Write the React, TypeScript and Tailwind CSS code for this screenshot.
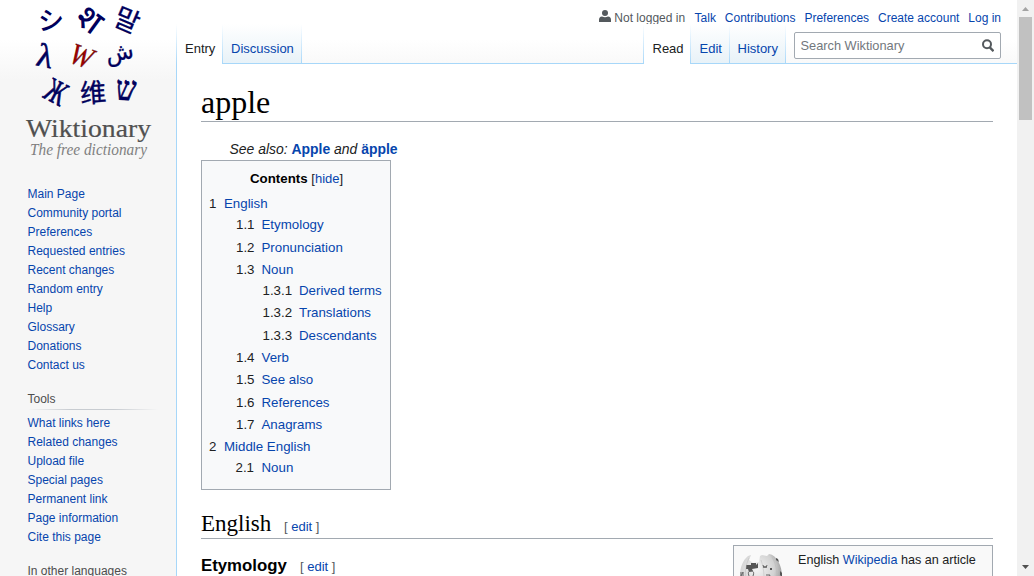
import React from "react";

const link = "text-[#0645ad]";

function Logo() {
  return (
    <svg width="176" height="170" viewBox="0 0 176 170" className="block shrink-0">
      <g fill="#00005c" textAnchor="middle">
        <text x="0" y="10" transform="translate(51 20) rotate(0)" fontFamily="Noto Sans CJK JP, sans-serif" fontSize="26" fontWeight="500">シ</text>
        <text x="0" y="12" transform="translate(90 19) rotate(36)" fontFamily="Noto Sans, Noto Sans Devanagari, sans-serif" fontSize="34" fontWeight="500">श</text>
        <text x="0" y="10" transform="translate(127 20) rotate(23)" fontFamily="Noto Sans CJK KR, sans-serif" fontSize="27" stroke="#00005c" strokeWidth=".3">말</text>
        <text x="0" y="11" transform="translate(45 56) rotate(12)" fontFamily="Liberation Serif, serif" fontSize="33" stroke="#00005c" strokeWidth=".6">λ</text>
        <text x="0" y="10" transform="translate(81.5 56) rotate(20) scale(.9 1)" fontFamily="Liberation Serif, serif" fontStyle="italic" fontSize="30" fill="#a00000" stroke="#300" strokeWidth=".3">W</text>
        <text x="0" y="4" transform="translate(120 56) rotate(-10)" fontFamily="DejaVu Sans, sans-serif" fontSize="23" stroke="#00005c" strokeWidth=".3">ش</text>
        <text x="0" y="11" transform="translate(56 92) rotate(28) scale(.66 1)" fontFamily="Liberation Serif, serif" fontSize="34" stroke="#00005c" strokeWidth=".8">Ж</text>
        <text x="0" y="10" transform="translate(93 92) rotate(-4)" fontFamily="Noto Sans CJK SC, sans-serif" fontSize="26" stroke="#00005c" strokeWidth=".4">维</text>
        <text x="0" y="10" transform="translate(126 90) rotate(3) scale(.84 1)" fontFamily="Liberation Serif, serif" fontSize="34" stroke="#00005c" strokeWidth=".7">ש</text>
      </g>
      <text x="26" y="137" textLength="125" lengthAdjust="spacingAndGlyphs" fontFamily="Liberation Serif, serif" fontSize="25.500" fill="#505050" stroke="#505050" strokeWidth=".2">Wiktionary</text>
      <text x="30" y="155" textLength="117" lengthAdjust="spacingAndGlyphs" fontFamily="Liberation Serif, serif" fontStyle="italic" fontSize="17" fill="#808080">The free dictionary</text>
    </svg>
  );
}

function Globe() {
  return (
    <svg width="46" height="44" viewBox="0 0 46 44" className="block">
      <defs>
        <radialGradient id="globe" cx="40%" cy="35%" r="70%">
          <stop offset="0" stopColor="#f4f4f4" />
          <stop offset=".6" stopColor="#d2d2d2" />
          <stop offset="1" stopColor="#858585" />
        </radialGradient>
      </defs>
      <path d="M9 2 12 1l-2 5 4 3 6-1 1-6 2-1 5 1 2-2C38 1 43 12 43 22 42 35 32 43 22 43 8 43 1 33 1 22 1 13 4 6 9 2Z" fill="url(#globe)" />
      <path d="M7 11h5V9h5v2l2-2v5l-6 1 1 2-4 1-1-3H7ZM37 4l2 1 1 3-3-2ZM41 17l2 2v4l-2-2ZM31 14h2v2h-2Z" fill="#555" />
      <path d="M22 6q4 10 3 28M10 4q-6 12-2 25M33 3q7 12 4 25" fill="none" stroke="#bbb" strokeWidth=".5" />
      <path d="M10 24v-2q-2-5 2-5t2 5v2M9 24h2m2 0h2M24 11l1 3 1-2 1 2 1-3M27 21h4l-2 5M2 18v4l2-4v4" fill="none" stroke="#666" strokeWidth="1" />
    </svg>
  );
}

const mainLinks = ["Main Page", "Community portal", "Preferences", "Requested entries", "Recent changes", "Random entry", "Help", "Glossary", "Donations", "Contact us"];
const toolLinks = ["What links here", "Related changes", "Upload file", "Special pages", "Permanent link", "Page information", "Cite this page"];

function NavList({ items }: { items: string[] }) {
  return (
    <ul>
      {items.map((t) => (
        <li key={t} className="h-[19px]"><a className={link}>{t}</a></li>
      ))}
    </ul>
  );
}

function Sidebar() {
  return (
    <aside className="flex h-[576px] w-[176px] shrink-0 flex-col overflow-hidden bg-[linear-gradient(#fff_40px,#f6f6f6_80px)] text-xs leading-[19px]">
      <Logo />
      <nav className="flex flex-col pt-[15px] pl-[27.5px]">
        <NavList items={mainLinks} />
        <h3 className="mt-[15px] h-[19px] text-[#4d4d4d]">Tools</h3>
        <div className="mb-[4px] h-px w-[130px] bg-[linear-gradient(to_right,rgba(200,204,209,0),#c8ccd1_33%,#c8ccd1_66%,rgba(200,204,209,0))]" />
        <NavList items={toolLinks} />
        <h3 className="mt-[15px] whitespace-nowrap text-[#4d4d4d]">In other languages</h3>
      </nav>
    </aside>
  );
}

const fade = "bg-[linear-gradient(#fff,#a7d7f9)]";

function Divider() {
  return <div className={`w-px shrink-0 ${fade}`} />;
}

function Header() {
  return (
    <header className="flex h-[64px] w-full flex-col bg-[linear-gradient(#fff_40px,#f9f9f9_64px)] text-xs">
      <div className="flex h-[24px] justify-end pr-[16px] leading-[36px] whitespace-nowrap">
        <svg width="12" height="12" viewBox="0 0 12 12" className="mt-[10px] mr-[3.5px]" fill="#54595d">
          <circle cx="6" cy="3.1" r="3" />
          <path d="M0 12V9.800Q0 7 3 6.600q3 1.400 6 0 3 .4 3 3.200V12Z" />
        </svg>
        <span className="mr-[9.5px] text-[#54595d]">Not logged in</span>
        <div className="flex gap-[8.9px]">
          {["Talk", "Contributions", "Preferences", "Create account", "Log in"].map((t) => (
            <a key={t} className={link}>{t}</a>
          ))}
        </div>
      </div>
      <div className="flex h-[40px] text-[13px] leading-[49px]">
        <div className="w-[45px] bg-white pl-[8px] text-[#202122]">Entry</div>
        <Divider />
        <div className={`w-[78px] border-b border-[#a7d7f9] bg-[linear-gradient(#fff,#e8f2f8)] pl-[8px] ${link}`}>Discussion</div>
        <Divider />
        <div className="grow border-b border-[#a7d7f9]" />
        <Divider />
        <div className="w-[46px] bg-white pl-[8.5px] text-[#202122]">Read</div>
        <Divider />
        <div className={`w-[38px] border-b border-[#a7d7f9] bg-[linear-gradient(#fff,#e8f2f8)] pl-[8.5px] ${link}`}>Edit</div>
        <Divider />
        <div className={`w-[55px] border-b border-[#a7d7f9] bg-[linear-gradient(#fff,#e8f2f8)] pl-[7.5px] ${link}`}>History</div>
        <Divider />
        <div className="w-[231px] border-b border-[#a7d7f9] pt-[8px] pl-[8px]">
          <div className="flex h-[27px] w-[207px] items-center justify-between rounded-[2px] border border-[#a2a9b1] bg-white pr-[6px] pl-[5.5px] text-[12.8px] leading-[25px] text-[#72777d]">
            <span>Search Wiktionary</span>
            <svg width="12" height="13" viewBox="0 0 12 13" fill="none" stroke="#54595d" strokeWidth="2">
              <circle cx="5" cy="5.3" r="4" />
              <path d="m7.800 8.300 3.700 3.900" strokeWidth="2.400" />
            </svg>
          </div>
        </div>
      </div>
    </header>
  );
}

const toc = [
  ["h-[21px] pl-[7px]", "w-[15px]", "1", "English"],
  ["h-[23px] pl-[34px]", "w-[25.5px]", "1.1", "Etymology"],
  ["h-[22px] pl-[34px]", "w-[25.5px]", "1.2", "Pronunciation"],
  ["h-[21px] pl-[34px]", "w-[25.5px]", "1.3", "Noun"],
  ["h-[22px] pl-[60.5px]", "w-[36.5px]", "1.3.1", "Derived terms"],
  ["h-[23px] pl-[60.5px]", "w-[36.5px]", "1.3.2", "Translations"],
  ["h-[22px] pl-[60.5px]", "w-[36.5px]", "1.3.3", "Descendants"],
  ["h-[22px] pl-[34px]", "w-[25.5px]", "1.4", "Verb"],
  ["h-[23px] pl-[34px]", "w-[25.5px]", "1.5", "See also"],
  ["h-[22px] pl-[34px]", "w-[25.5px]", "1.6", "References"],
  ["h-[22px] pl-[34px]", "w-[25.5px]", "1.7", "Anagrams"],
  ["h-[21px] pl-[7px]", "w-[15px]", "2", "Middle English"],
  ["h-[22px] pl-[33.5px]", "w-[26px]", "2.1", "Noun"],
];

function Toc() {
  return (
    <div className="h-[330px] w-[190px] border border-[#a2a9b1] bg-[#f8f9fa] pt-[8px] text-[13.3px] leading-5 whitespace-nowrap">
      <div className="h-[25px] pl-[48px]"><b className="text-black">Contents</b> <span className="text-[13px]">[<a className={link}>hide</a>]</span></div>
      {toc.map(([row, num, n, t]) => (
        <div key={n} className={`flex ${row}`}>
          <span className={`shrink-0 ${num}`}>{n}</span>
          <a className={link}>{t}</a>
        </div>
      ))}
    </div>
  );
}

function EditLink() {
  return (
    <span className="text-[13px] leading-5 text-[#54595d]">[ <a className={link}>edit</a> ]</span>
  );
}

function Content() {
  return (
    <main className="flex flex-col pt-[20px] pr-[24px] pl-[24px] text-[14px] text-[#202122]">
      <h1 className="h-[38px] border-b border-[#a2a9b1] font-['Liberation_Serif',serif] text-[32px] leading-[36px] text-black">apple</h1>
      <p className="mt-[17px] h-[21px] pl-[28.5px] text-[13.95px] leading-[21px] italic">
        See also: <b className={`not-italic ${link}`}>Apple</b> and <b className={`not-italic ${link}`}>äpple</b>
      </p>
      <Toc />
      <div className="mt-[20px] flex h-[29px] items-start border-b border-[#a2a9b1]">
        <h2 className="w-[83px] font-['Liberation_Serif',serif] text-[23px] leading-[28px] text-black">English</h2>
        <div className="pt-[6px]"><EditLink /></div>
      </div>
      <div className="flex justify-between">
        <div className="flex pt-[16px]">
          <h3 className="w-[99px] text-[16.8px] leading-[21px] font-bold text-black">Etymology</h3>
          <div className="pt-[1px]"><EditLink /></div>
        </div>
        <div className="mt-[6px] flex h-[60px] w-[260px] border border-[#a2a9b1] bg-[#f9f9f9] pt-[8px] pl-[5px]">
          <Globe />
          <div className="-mt-[4px] ml-[13px] text-[12.6px] leading-5 whitespace-nowrap">English <a className={link}>Wikipedia</a> has an article</div>
        </div>
      </div>
    </main>
  );
}

function Scrollbar() {
  return (
    <div className="flex h-[576px] w-[17px] shrink-0 flex-col items-center bg-[#f1f1f1]">
      <svg width="17" height="17" viewBox="0 0 17 17" className="shrink-0"><path d="M5 11h7L8.500 7Z" fill="#a3a3a3" /></svg>
      <div className="h-[103px] w-[13px] bg-[#c1c1c1]" />
      <div className="grow" />
      <svg width="17" height="17" viewBox="0 0 17 17" className="shrink-0"><path d="M5 6h7L8.500 10Z" fill="#505050" /></svg>
    </div>
  );
}

export default function App() {
  return (
    <div className="flex h-[576px] w-[1034px] overflow-hidden bg-white font-['Liberation_Sans',Arial,sans-serif]">
      <Sidebar />
      <div className="h-[576px] w-px shrink-0 bg-[linear-gradient(#fff_24px,#a7d7f9_64px)]" />
      <div className="flex h-[576px] min-w-0 grow flex-col overflow-hidden">
        <Header />
        <Content />
      </div>
      <Scrollbar />
    </div>
  );
}
